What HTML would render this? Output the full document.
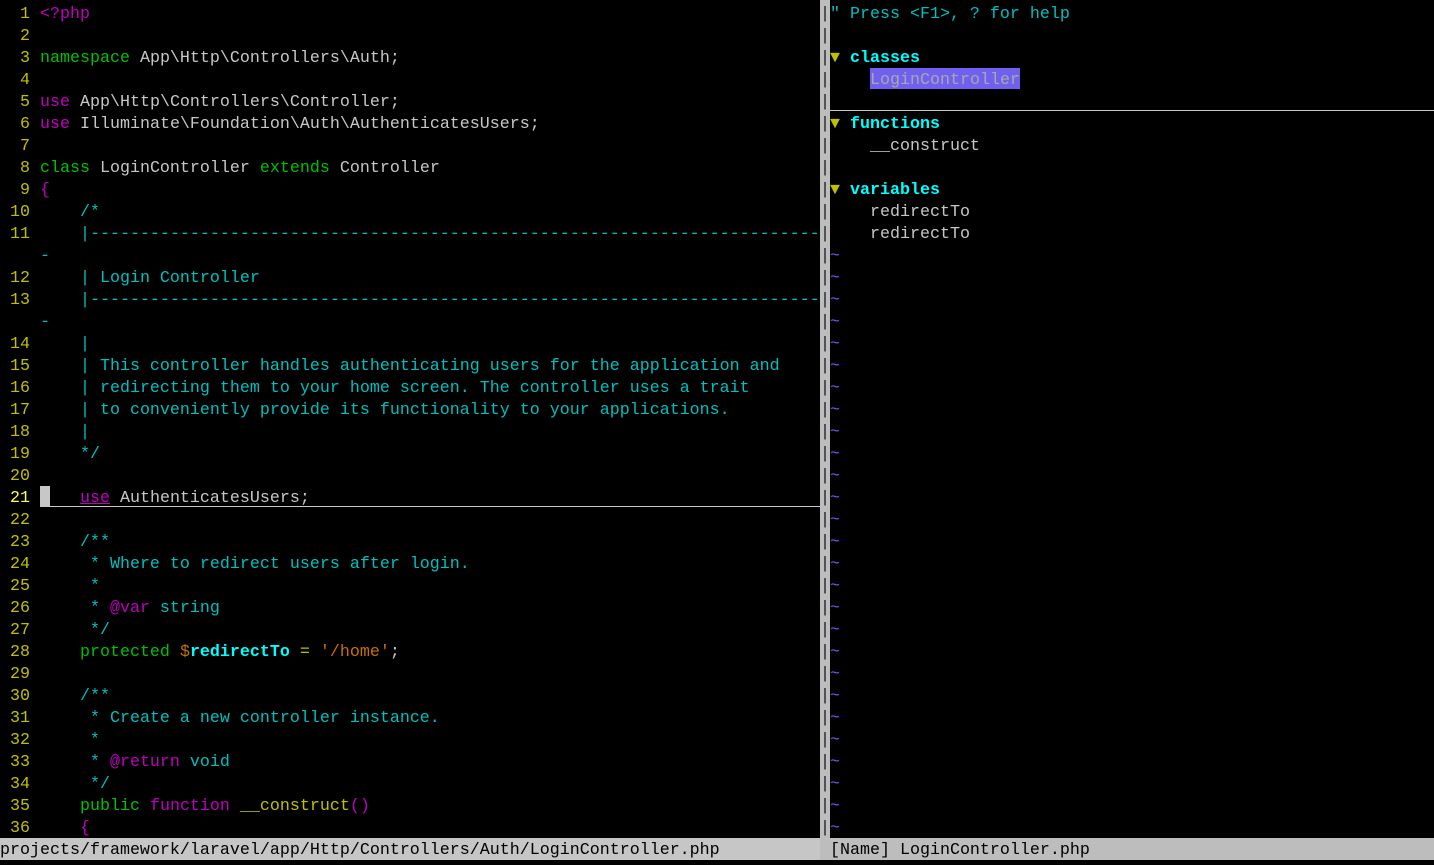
<!DOCTYPE html>
<html><head><meta charset="utf-8"><style>
html,body{margin:0;padding:0;background:#000;width:1434px;height:865px;overflow:hidden}
body{font-family:"Liberation Mono","DejaVu Sans Mono",monospace;font-size:16.67px;color:#c7c7c7;position:relative}
.r{position:absolute;left:0;height:22px;line-height:22px;white-space:pre;padding-top:2px}
.n{color:#c0c000}.g{color:#00c000}.m{color:#c000c0}.c{color:#00bfbf}.y{color:#c0c000}.o{color:#c87000}
.bc{color:#00ffff;font-weight:bold}.t{color:#6a5cff}
#sep{position:absolute;left:820px;top:0;width:10px;height:838px;background:#bdbdbd}
.sp{position:absolute;left:820px;width:10px;height:22px;line-height:22px;padding-top:2px;color:#222;text-align:center}
</style></head><body>
<div id="sep"></div>
<div class="r" style="top:2px"><span class="n">  1 </span><span class="m">&lt;?php</span></div>
<div class="r" style="top:24px"><span class="n">  2 </span></div>
<div class="r" style="top:46px"><span class="n">  3 </span><span class="g">namespace</span> App\Http\Controllers\Auth;</div>
<div class="r" style="top:68px"><span class="n">  4 </span></div>
<div class="r" style="top:90px"><span class="n">  5 </span><span class="m">use</span> App\Http\Controllers\Controller;</div>
<div class="r" style="top:112px"><span class="n">  6 </span><span class="m">use</span> Illuminate\Foundation\Auth\AuthenticatesUsers;</div>
<div class="r" style="top:134px"><span class="n">  7 </span></div>
<div class="r" style="top:156px"><span class="n">  8 </span><span class="g">class</span> LoginController <span class="g">extends</span> Controller</div>
<div class="r" style="top:178px"><span class="n">  9 </span><span class="m">{</span></div>
<div class="r" style="top:200px"><span class="n"> 10 </span><span class="c">    /*</span></div>
<div class="r" style="top:222px"><span class="n"> 11 </span><span class="c">    |-------------------------------------------------------------------------</span></div>
<div class="r" style="top:244px"><span class="c">    -</span></div>
<div class="r" style="top:266px"><span class="n"> 12 </span><span class="c">    | Login Controller</span></div>
<div class="r" style="top:288px"><span class="n"> 13 </span><span class="c">    |-------------------------------------------------------------------------</span></div>
<div class="r" style="top:310px"><span class="c">    -</span></div>
<div class="r" style="top:332px"><span class="n"> 14 </span><span class="c">    |</span></div>
<div class="r" style="top:354px"><span class="n"> 15 </span><span class="c">    | This controller handles authenticating users for the application and</span></div>
<div class="r" style="top:376px"><span class="n"> 16 </span><span class="c">    | redirecting them to your home screen. The controller uses a trait</span></div>
<div class="r" style="top:398px"><span class="n"> 17 </span><span class="c">    | to conveniently provide its functionality to your applications.</span></div>
<div class="r" style="top:420px"><span class="n"> 18 </span><span class="c">    |</span></div>
<div class="r" style="top:442px"><span class="n"> 19 </span><span class="c">    */</span></div>
<div class="r" style="top:464px"><span class="n"> 20 </span></div>
<div style="position:absolute;left:50px;top:506px;width:770px;height:1px;background:#c7c7c7"></div>
<div style="position:absolute;left:40px;top:486px;width:10px;height:21px;background:#c7c7c7"></div>
<div class="r" style="top:486px"><span style="color:#ffff55"> 21 </span>    <span class="m" style="text-decoration:underline">use</span> AuthenticatesUsers;</div>
<div class="r" style="top:508px"><span class="n"> 22 </span></div>
<div class="r" style="top:530px"><span class="n"> 23 </span><span class="c">    /**</span></div>
<div class="r" style="top:552px"><span class="n"> 24 </span><span class="c">     * Where to redirect users after login.</span></div>
<div class="r" style="top:574px"><span class="n"> 25 </span><span class="c">     *</span></div>
<div class="r" style="top:596px"><span class="n"> 26 </span><span class="c">     * </span><span class="m">@var</span><span class="c"> string</span></div>
<div class="r" style="top:618px"><span class="n"> 27 </span><span class="c">     */</span></div>
<div class="r" style="top:640px"><span class="n"> 28 </span>    <span class="g">protected</span> <span class="o">$</span><span class="bc">redirectTo</span> <span class="y">=</span> <span class="o">'/home'</span>;</div>
<div class="r" style="top:662px"><span class="n"> 29 </span></div>
<div class="r" style="top:684px"><span class="n"> 30 </span><span class="c">    /**</span></div>
<div class="r" style="top:706px"><span class="n"> 31 </span><span class="c">     * Create a new controller instance.</span></div>
<div class="r" style="top:728px"><span class="n"> 32 </span><span class="c">     *</span></div>
<div class="r" style="top:750px"><span class="n"> 33 </span><span class="c">     * </span><span class="m">@return</span><span class="c"> void</span></div>
<div class="r" style="top:772px"><span class="n"> 34 </span><span class="c">     */</span></div>
<div class="r" style="top:794px"><span class="n"> 35 </span>    <span class="g">public</span> <span class="m">function</span> <span class="y">__construct</span><span class="m">()</span></div>
<div class="r" style="top:816px"><span class="n"> 36 </span>    <span class="m">{</span></div>

<div class="sp" style="top:2px">|</div><div class="sp" style="top:24px">|</div><div class="sp" style="top:46px">|</div><div class="sp" style="top:68px">|</div><div class="sp" style="top:90px">|</div><div class="sp" style="top:112px">|</div><div class="sp" style="top:134px">|</div><div class="sp" style="top:156px">|</div><div class="sp" style="top:178px">|</div><div class="sp" style="top:200px">|</div><div class="sp" style="top:222px">|</div><div class="sp" style="top:244px">|</div><div class="sp" style="top:266px">|</div><div class="sp" style="top:288px">|</div><div class="sp" style="top:310px">|</div><div class="sp" style="top:332px">|</div><div class="sp" style="top:354px">|</div><div class="sp" style="top:376px">|</div><div class="sp" style="top:398px">|</div><div class="sp" style="top:420px">|</div><div class="sp" style="top:442px">|</div><div class="sp" style="top:464px">|</div><div class="sp" style="top:486px">|</div><div class="sp" style="top:508px">|</div><div class="sp" style="top:530px">|</div><div class="sp" style="top:552px">|</div><div class="sp" style="top:574px">|</div><div class="sp" style="top:596px">|</div><div class="sp" style="top:618px">|</div><div class="sp" style="top:640px">|</div><div class="sp" style="top:662px">|</div><div class="sp" style="top:684px">|</div><div class="sp" style="top:706px">|</div><div class="sp" style="top:728px">|</div><div class="sp" style="top:750px">|</div><div class="sp" style="top:772px">|</div><div class="sp" style="top:794px">|</div><div class="sp" style="top:816px">|</div>

<div class="r" style="left:830px;top:2px;color:#00bfbf">" Press &lt;F1&gt;, ? for help</div>
<div class="r" style="left:830px;top:46px"><span class="y">▼</span> <span class="bc">classes</span></div>
<div style="position:absolute;left:870px;top:68px;width:150px;height:21px;background:#7160f0"></div>
<div class="r" style="left:870px;top:68px;color:#a8a8a8">LoginController</div>
<div style="position:absolute;left:830px;top:110px;width:604px;height:1px;background:#c7c7c7"></div>
<div class="r" style="left:830px;top:112px"><span class="y">▼</span> <span class="bc">functions</span></div>
<div class="r" style="left:830px;top:134px">    __construct</div>
<div class="r" style="left:830px;top:178px"><span class="y">▼</span> <span class="bc">variables</span></div>
<div class="r" style="left:830px;top:200px">    redirectTo</div>
<div class="r" style="left:830px;top:222px">    redirectTo</div>
<div class="r t" style="left:830px;top:244px;line-height:22px">~
~
~
~
~
~
~
~
~
~
~
~
~
~
~
~
~
~
~
~
~
~
~
~
~
~
~</div>

<div style="position:absolute;left:0;top:838px;width:820px;height:22px;background:#c6c6c6"></div>
<div style="position:absolute;left:820px;top:838px;width:614px;height:22px;background:#bdbdbd"></div>
<div class="r" style="top:838px;color:#000">projects/framework/laravel/app/Http/Controllers/Auth/LoginController.php</div>
<div class="r" style="top:838px;left:830px;color:#000">[Name] LoginController.php</div>
</body></html>
